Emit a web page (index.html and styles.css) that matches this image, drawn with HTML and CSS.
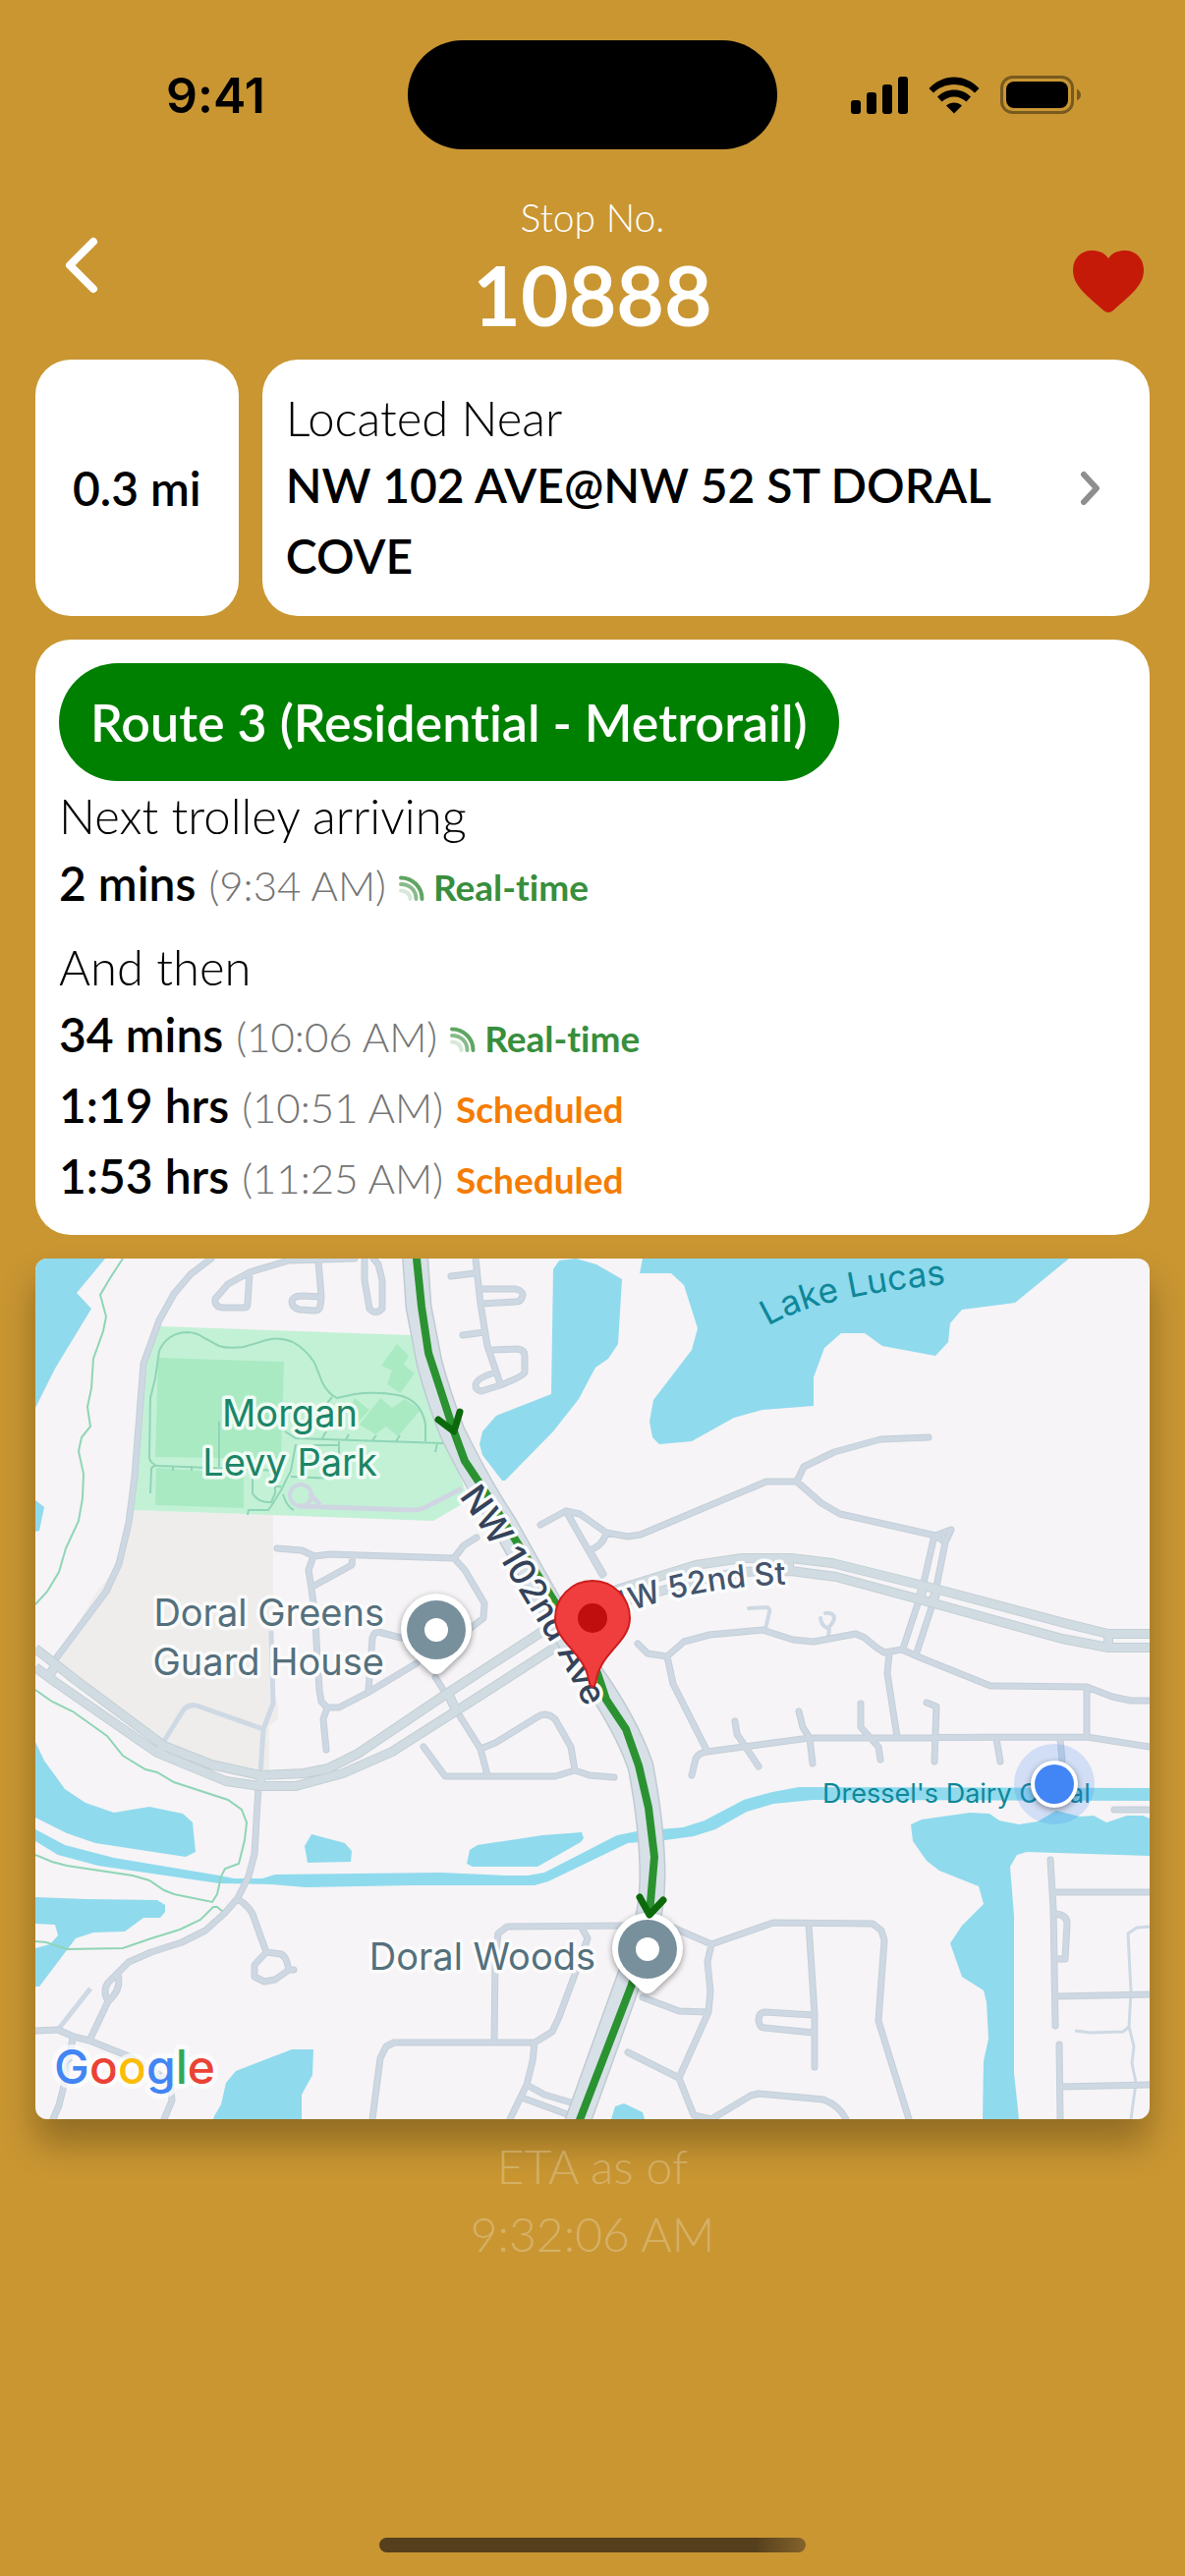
FILE: index.html
```html
<!DOCTYPE html>
<html lang="en">
<head>
    <meta charset="UTF-8">
    <meta name="viewport" content="width=device-width, initial-scale=1.0">
    <title>Stop 10888</title>
    <link rel="stylesheet" href="styles.css">
</head>
<body>
    <div class="status-bar">
        <div class="status-time">9:41</div>
        <div class="island"></div>
        <div class="status-icons">
            <svg class="signal-icon" viewBox="0 0 58 38">
                <rect x="0" y="24" width="10" height="14" rx="3"/>
                <rect x="16" y="16" width="10" height="22" rx="3"/>
                <rect x="32" y="8" width="10" height="30" rx="3"/>
                <rect x="48" y="0" width="10" height="38" rx="3"/>
            </svg>
            <svg class="wifi-icon" viewBox="0 0 52 38">
                <path d="M26 8C34.500 8 42 11.500 47 16.500L51.500 12C45 5 36 0.500 26 0.500S7 5 0.500 12L5 16.500C10 11.500 17.500 8 26 8Z"/>
                <path d="M26 20.500C31 20.500 35 22.500 38.500 25.500L43 20.500C38.500 16 32.500 13.500 26 13.500S13.500 16 9 20.500L13.500 25.500C17 22.500 21 20.500 26 20.500Z"/>
                <path d="M26 37.500L34 29.500C32 27.500 29 26.500 26 26.500S20 27.500 18 29.500Z"/>
            </svg>
            <svg class="battery-icon" viewBox="0 0 82 40">
                <rect x="1.500" y="1.500" width="72" height="36" rx="11" fill="none" stroke="#000" stroke-opacity=".4" stroke-width="3"/>
                <rect x="6" y="6" width="63" height="27" rx="8"/>
                <path d="M78 13.500C80.500 15 82 17 82 19.500S80.500 24 78 25.500Z" opacity=".4"/>
            </svg>
        </div>
    </div>

    <header class="header">
        <button class="back-btn" aria-label="Back">
            <svg class="back-icon" viewBox="0 0 34 58">
                <path d="M29 5L5 29L29 53"/>
            </svg>
        </button>
        <div class="stop-title">
            <div class="stop-label">Stop No.</div>
            <h1>10888</h1>
        </div>
        <button class="favorite-btn" aria-label="Favorite">
            <svg class="heart-icon" viewBox="0 0 72 64">
                <path d="M36 63C34 63 32 62 30 60C12 44 0 35 0 20C0 8 8 0 19 0C26 0 32 2 36 8C40 2 46 0 53 0C64 0 72 8 72 20C72 35 60 44 42 60C40 62 38 63 36 63Z"/>
            </svg>
        </button>
    </header>

    <main class="content">
        <div class="info-row">
            <div class="card distance-card">0.3 mi</div>
            <a href="#map" class="card location-card">
                <div class="location">
                    <div class="label">Located Near</div>
                    <div class="value">NW 102 AVE@NW 52 ST DORAL COVE</div>
                </div>
                <svg class="chevron-icon" viewBox="0 0 24 36">
                    <path d="M5 4L18 18L5 32"/>
                </svg>
            </a>
        </div>

        <section class="card route-card">
            <button class="route-btn">Route 3 (Residential - Metrorail)</button>
            <div class="label">Next trolley arriving</div>
            <div class="arrival">
                <span class="eta">2 mins</span>
                <span class="clock">(9:34 AM)</span>
                <span class="live">
                    <svg class="live-icon" viewBox="0 0 26 26"><use href="#live"/></svg>
                    Real-time
                </span>
            </div>
            <div class="label later">And then</div>
            <div class="arrival">
                <span class="eta">34 mins</span>
                <span class="clock">(10:06 AM)</span>
                <span class="live">
                    <svg class="live-icon" viewBox="0 0 26 26"><use href="#live"/></svg>
                    Real-time
                </span>
            </div>
            <div class="arrival">
                <span class="eta">1:19 hrs</span>
                <span class="clock">(10:51 AM)</span>
                <span class="scheduled">Scheduled</span>
            </div>
            <div class="arrival">
                <span class="eta">1:53 hrs</span>
                <span class="clock">(11:25 AM)</span>
                <span class="scheduled">Scheduled</span>
            </div>
        </section>

        <div class="map" id="map">
            <svg class="map-canvas" viewBox="0 0 1134 876">
                <defs>
                    <g id="live" fill="none" stroke="#388e3c" stroke-width="4" stroke-linecap="round">
                        <path d="M2 2.500C14 2.500 23.500 12 23.500 24" opacity=".8"/>
                        <path d="M2 9C11 9 17.500 15 17.500 24" opacity=".6"/>
                        <path d="M2 15.500C7 15.500 11.500 19 11.500 24" opacity=".2"/>
                    </g>
                    <path id="streets" d="M179 0L158 16L141 36L126 63L110 107L101 222L95 269L85 311L72 339L21 407
                        M325 0L258 2L218 14L196 26L183 41Q182 50 192 50H212Q216 50 216 46L218 14 M288 2L291 39L290 48Q289 53 284 53L269 52Q261 50 261 44Q262 38 271 38L291 39
                        M335 0V22L340 51Q346 58 353 51V22L349 6L344 0
                        M448 0L453 46L460 89L473 127 M423 18L447 15 M453 31H489Q496 33 496 37Q495 44 489 44L454 46 M435 78L457 75
                        M464 93L491 92Q498 93 498 99V116Q496 120 473 129L454 135Q448 134 448 129Q448 122 468 116
                        M246 295L271 297L284 303L300 301L426 305L436 292L449 284 M426 305L437 317L457 351L456 366L443 376
                        M283 303L278 317L281 336L285 366L286 389L289 439L291 451L297 457L293 469L296 500 M323 302L322 312L282 334
                        M297 457H309L338 442L388 412 M339 439L343 386Q345 380 349 380L372 386 M407 426L453 499L460 526
                        M453 499L468 493L512 466Q521 461 529 469L545 497L549 521L529 527H417L395 497 M549 521L564 526L589 528
                        M227 537L223 606L217 629L206 651L193 666L173 684L149 696L118 706L95 716L84 727L74 737Q68 746 74 756Q88 744 84 729
                        M74 756L55 796 M0 786L23 785L39 792L55 796L95 812L114 824L137 837L139 857L131 876 M38 794L28 846L24 862L18 876
                        M206 652Q216 658 221 667L235 706L250 708Q254 710 256 716L258 724L244 734L233 736L223 731V719L235 706 M258 724H263
                        M467 798L468 712L471 687L480 680L599 679 M556 681L562 692L550 726L533 772L526 787L508 798L365 798L357 802L351 814L343 876
                        M508 798L506 817L500 841L483 876 M500 841L518 851L545 859 M495 854L541 871
                        M514 271L540 257L554 260L581 279L603 283L616 281L744 227H775L782 212L813 197L860 184L909 182
                        M775 227L800 249L819 260L916 282L932 276L926 289L916 282 M540 257L577 322 M581 279Q578 292 564 297L578 321
                        M914 286L902 339L883 397 M926 289L914 349L896 404
                        M649 681L688 698L751 676L852 677L861 684L864 694L858 776L889 876 M787 677L793 769V823
                        M792 770L742 767Q736 768 736 775Q737 783 742 783L792 788
                        M688 698L684 716L687 746L685 767L655 834L670 872L688 876L728 852L736 850L802 856Q818 862 825 876 M685 767L655 766L618 752 M603 808L655 834
                        M613 392L623 402L643 405L660 390L686 383L740 378L771 388L792 390L835 382L844 386L856 396L864 401L882 398L900 406L972 435L1070 436L1096 446L1115 450H1134
                        M643 405L649 433L684 502 M869 402L867 422L877 487
                        M668 526L672 509Q675 503 684 502L788 488L1070 487L1134 497 M1070 436V487
                        M712 471L714 484L736 517 M777 461L781 477L788 488L791 514 M840 453V477L858 497L860 510 M907 452L917 456L915 512
                        M978 489L982 512 M1043 489L1045 511 M1098 561H1134
                        M1033 612L1036 662L1038 781 M1036 645H1134 M1038 667Q1050 668 1050 677L1048 713H1038 M1040 751L1134 749
                        M1042 800L1043 876 M1043 843L1134 841"/>
                    <path id="avenue52" d="M0 397L41 429L131 496L179 515L229 526L273 524L298 519L328 504L420 442L520 377L560 350L595 336L672 312L719 305H769L811 310L904 333L1051 372L1092 382H1134
                        M0 416L20 431L124 503L194 532L229 537H265L313 524L363 502L462 439L527 397L570 364L600 349L680 326L719 319L769 318L815 324L900 347L1045 387L1092 396H1134 M22 413L14 424 M131 496L124 503 M229 526V537 M420 442L428 460 M767 305V318 M904 333L900 347 M918 337L912 351 M1092 382V396"/>
                    <path id="avenue102" d="M386 -10L390 49L401 106Q410 140 424 176Q450 230 478 272L506 322L556 410Q600 470 616 517Q628 580 628 629Q628 660 618 695L600 745L550 884"/>
                    <path id="grey-pin" d="M0 45Q-5 45 -9 40L-26 24A36 36 0 1 1 26 24L9 40Q5 45 0 45Z"/>
                    <path id="lakeCurve" d="M746 69Q796 38 930 26"/>
                    <path id="curve52" d="M585 367Q665 333 780 331"/>
                    <path id="curve102" d="M431 242Q455 275 476 311T535 408L572 480"/>
                </defs>

                <rect width="1134" height="876" fill="#f6f4f6"/>
                <path fill="#eeedeb" d="M99 256L242 261V440L247 455V469L238 476V522L175 512L129 492L22 408L62 340L85 312Z"/>

                <!-- park -->
                <path fill="#c3f1d6" d="M126 69L382 78L441 246L405 267L99 256L110 107Z"/>
                <path fill="#a9eac3" d="M125 101L253 105L250 204L122 202Z M123 213L212 219V254L122 251Z M368 87L380 99L375 108L386 117L371 137L358 128L363 114L352 109Z M351 142L363 152L376 143L392 154L369 181L357 171L346 179L330 169Z M325 142L340 154L328 167L318 158Z"/>
                <g fill="none" stroke="#8fd5b6" stroke-width="2">
                    <path d="M117 239L118 214Q120 210 126 211L250 216 M187 166V212 M122 210Q116 207 116 202L117 142L122 122L126 94Q134 76 154 75Q164 75 172 81L187 89Q196 92 212 90L235 83Q248 79 262 85Q276 93 284 106L292 126Q298 138 307 142L325 138Q347 135 369 139Q393 144 397 169V186"/>
                    <path d="M415 188L265 183L254 176 M265 189L260 216L250 236L240 252L237 256H217L216 261 M221 222V239Q227 249 240 248L244 239V232H250 M252 240Q256 253 263 256 M309 186V205 M283 190H309 M305 224L260 222 M302 141L297 147 M296 176L292 183 M319 179L316 184 M347 180L343 185 M371 180L367 186 M140 211V216 M159 211V216 M409 188L407 197"/>
                </g>

                <!-- water -->
                <g fill="#90daed">
                    <path d="M0 0H71L42 35L57 51L20 112L0 152Z M0 246L9 253L4 277L0 278Z"/>
                    <path d="M527 11L533 2L550 0L571 6L597 21L593 87L583 102L570 111L564 122L553 143L527 176L478 226H475L455 200L452 189L455 176L469 160L525 138Z"/>
                    <path d="M618 0L615 15H647L660 27L674 71L668 93L629 144L625 166L628 182L635 189L668 186L711 162L740 154L792 150V121L803 91L820 76H844L862 89L916 99L929 85L931 66L943 52L997 45L1052 0Z"/>
                    <path d="M0 492L9 511L30 540L51 554L80 564L116 558L150 565L160 574L163 604L153 609L61 595L32 585L0 569Z"/>
                    <path d="M0 581L30 597L80 610L187 628L202 631H231L244 627L325 626L413 625L478 628H501L518 625L592 587L612 583L659 579L681 572L721 551L750 543L777 538L1134 539V552L792 551L751 555L724 563L692 581L670 588L641 592L603 595L522 634L508 638H384L275 640L240 637L187 636L64 618L23 607L0 593Z"/>
                    <path d="M274 598L281 586L315 595L322 603L321 614L277 615Z M439 616L442 602L450 597L516 587L556 584L558 590L555 594L511 619H445Z"/>
                    <path d="M0 650L51 652L124 653L132 658V665L127 671H110L91 685L59 686L41 692L4 741H0V702L15 698L23 689L20 678L0 677Z"/>
                    <path d="M182 873L189 861L194 839L204 827L261 805H283L282 831L271 851V876H181Z M586 876L590 863L599 860L618 869L620 876Z"/>
                    <path d="M891 576L902 571L951 564L971 565L981 572L1001 576L1020 573L1039 562L1063 568L1077 567L1090 574L1111 567H1127L1134 570V608L1009 604L999 607L992 619L996 669V829L1001 876H964L965 817L970 794L968 757L965 745L943 731L931 697L943 679L965 657L960 639L920 623L907 613L893 593Z"/>
                </g>

                <!-- creek trails -->
                <path fill="none" stroke="#8fd5b6" stroke-width="2" d="M89 0L76 20L66 37L72 59L69 74L59 102L57 132L53 151L56 171L47 182L44 196L49 219L48 244L44 267L31 295L24 319L12 339L0 352
                    M0 439L17 451L38 461L73 486L89 506L112 520L124 523L141 533L196 551L210 561L215 574L213 592L207 616L193 621L189 629L185 647L180 655L141 647L131 643L116 633L99 628L32 618L17 614L0 607
                    M0 695L11 696L32 703L89 702L118 692L147 683L168 673L181 660H185L191 665"/>

                <!-- roads -->
                <g fill="none" stroke-linejoin="round">
                    <path d="M434 234L405 249Q394 256 384 256L267 252M279 239L290 251" stroke="#cfd6e2" stroke-width="5"/>
                    <circle cx="270" cy="241" r="11" stroke="#cfd6e2" stroke-width="4"/>
                    <path d="M240 379L242 453L232 479L229 526 M131 491L149 462Q154 453 164 455L232 479 M56 743L23 785" stroke="#ced9e4" stroke-width="5"/>
                    <path d="M726 356L744 355Q748 356 747 360L743 377 M799 366Q800 374 806 376Q812 372 813 366Q812 360 804 361 M808 376L807 386" stroke="#ced9e4" stroke-width="4" stroke-linecap="round"/>
                    <path d="M1134 680L1121 681L1112 687L1115 746L1113 782L1118 802L1116 819L1120 839L1115 876 M1058 786L1074 788L1107 787L1113 782" stroke="#ced9e4" stroke-width="3"/>
                    <use href="#streets" stroke="#c4cfd9" stroke-width="7" stroke-linecap="round"/>
                    <use href="#streets" stroke="#ced8e3" stroke-width="5" stroke-linecap="round"/>
                    <use href="#avenue52" stroke="#c3cfd5" stroke-width="10"/>
                    <use href="#avenue52" stroke="#d1dce2" stroke-width="8"/>
                    <use href="#avenue102" stroke="#bfcad2" stroke-width="27"/>
                    <use href="#avenue102" stroke="#d7e0e7" stroke-width="24"/>
                </g>

                <!-- place labels -->
                <g class="place park-name" text-anchor="middle">
                    <text x="259" y="171">Morgan</text>
                    <text x="259" y="221">Levy Park</text>
                </g>
                <g class="place" text-anchor="end">
                    <text x="355" y="374">Doral Greens</text>
                    <text x="355" y="424">Guard House</text>
                    <text x="570" y="724">Doral Woods</text>
                </g>
                <text class="water-name lake"><textPath href="#lakeCurve">Lake Lucas</textPath></text>
                <text class="water-name" x="801" y="554">Dressel's Dairy Canal</text>

                <!-- place pins -->
                <g class="place-pin" transform="translate(408 378)">
                    <use href="#grey-pin" fill="#fff"/>
                    <circle r="30" fill="#78909c"/>
                    <circle r="12" fill="#fff"/>
                </g>

                <!-- trolley route -->
                <path d="M388 -5L388 0L393 49L400 96L426 176L437 206L451 227L539 366L572 422L581 449L601 479L614 516L624 559L630 609L625 667L607 739L552 882" fill="none" stroke="#2b9231" stroke-width="8" stroke-linejoin="round"/>
                <g class="place-pin" transform="translate(623 703)">
                    <use href="#grey-pin" fill="#fff"/>
                    <circle r="30" fill="#78909c"/>
                    <circle r="12" fill="#fff"/>
                </g>
                <path d="M410 164L426 176L432 156 M615 650L625 668L639 653 M538 402L554 411L560 392" fill="none" stroke="#0c6a0c" stroke-width="7" stroke-linecap="round" stroke-linejoin="round"/>
                <text class="street-name"><textPath href="#curve52">NW 52nd St</textPath></text>
                <text class="street-name main-street"><textPath href="#curve102">NW 102nd Ave</textPath></text>

                <!-- stop marker -->
                <path d="M567 436C565 436 564 434 563 428C558 401 529 390 529 366A38 38 0 0 1 605 366C605 390 576 401 571 428C570 434 569 436 567 436Z" fill="#f03e3e" stroke="#cc1d1d" stroke-width="2"/>
                <circle cx="567" cy="366" r="15" fill="#c00d0d"/>

                <!-- rider position -->
                <circle cx="1037" cy="535" r="41" fill="#4285f4" opacity=".2"/>
                <circle class="rider" cx="1037" cy="535" r="24" fill="#fff"/>
                <circle cx="1037" cy="535" r="20" fill="#4285f4"/>

                <text class="google" x="19" y="840"><tspan fill="#4285f4">G</tspan><tspan fill="#ea4335">o</tspan><tspan fill="#fbbc04">o</tspan><tspan fill="#4285f4">g</tspan><tspan fill="#34a853">l</tspan><tspan fill="#ea4335">e</tspan></text>
            </svg>
        </div>

        <div class="updated">
            <div>ETA as of</div>
            <div>9:32:06 AM</div>
        </div>
    </main>

    <div class="home-indicator"></div>
</body>
</html>
```
FILE: styles.css
```css
* {
    box-sizing: border-box;
}

body {
    font-family: 'Lato', sans-serif;
    font-variant-ligatures: none;
    margin: 0;
    background-color: #c99632;
    color: #000;
    min-height: 100vh;
    display: flex;
    flex-direction: column;
}

button {
    font-family: inherit;
    font-variant-ligatures: inherit;
    border: none;
    padding: 0;
    background: none;
    cursor: pointer;
}

.status-bar {
    display: grid;
    grid-template-columns: 1fr auto 1fr;
    align-items: center;
    padding-top: 41px;
}

.status-time {
    font-family: 'Inter', sans-serif;
    font-size: 50px;
    font-weight: 600;
    text-align: center;
    padding-left: 24px;
}

.island {
    width: 376px;
    height: 111px;
    border-radius: 56px;
    background-color: #000;
}

.status-icons {
    display: flex;
    align-items: center;
    justify-content: center;
    gap: 21px;
    padding-right: 32px;
}

.signal-icon {
    width: 58px;
    height: 38px;
}

.wifi-icon {
    width: 52px;
    height: 38px;
}

.battery-icon {
    width: 82px;
    height: 40px;
}

.header {
    display: grid;
    grid-template-columns: 1fr auto 1fr;
    align-items: center;
    padding: 42px 42px 14px;
    color: white;
}

.back-btn {
    justify-self: start;
    padding: 0 24px 6px;
}

.back-icon {
    display: block;
    width: 34px;
    height: 58px;
    fill: none;
    stroke: white;
    stroke-width: 8;
    stroke-linecap: round;
    stroke-linejoin: round;
}

.stop-title {
    text-align: center;
}

.stop-label {
    font-size: 39px;
    font-weight: 300;
    line-height: 54px;
}

.stop-title h1 {
    margin: 0;
    font-size: 84px;
    font-weight: 700;
    line-height: 104px;
}

.favorite-btn {
    justify-self: end;
    padding-top: 28px;
}

.heart-icon {
    display: block;
    width: 72px;
    height: 64px;
    fill: #c61a09;
}

.content {
    display: flex;
    flex-direction: column;
    gap: 24px;
    padding: 0 36px;
}

.card {
    background-color: white;
    border-radius: 36px;
    padding: 24px;
}

.info-row {
    display: flex;
    gap: 24px;
}

.distance-card {
    display: flex;
    align-items: center;
    flex: none;
    padding: 0 38px;
    font-size: 48px;
    font-weight: 600;
}

.location-card {
    display: flex;
    align-items: center;
    flex: 1;
    gap: 24px;
    padding: 26px 48px 25px 24px;
    color: inherit;
    text-decoration: none;
}

.location {
    flex: 1;
}

.label {
    font-size: 49px;
    font-weight: 300;
    line-height: 66px;
}

.value {
    font-size: 48px;
    font-weight: 600;
    line-height: 72px;
}

.chevron-icon {
    width: 24px;
    height: 36px;
    fill: none;
    stroke: #8e8e8e;
    stroke-width: 6;
    stroke-linecap: round;
    stroke-linejoin: round;
}

.route-btn {
    display: block;
    height: 120px;
    margin-bottom: 2px;
    padding: 0 32px;
    border-radius: 60px;
    background-color: #008000;
    color: white;
    font-size: 52px;
    font-weight: 600;
}

.arrival {
    display: flex;
    align-items: baseline;
    gap: 13px;
    line-height: 48px;
}

.later {
    margin-top: 16px;
}

.eta {
    font-size: 48px;
    font-weight: 600;
    line-height: 72px;
}

.clock {
    font-size: 42px;
    font-weight: 300;
    color: #757575;
}

.live,
.scheduled {
    font-size: 37px;
    font-weight: 700;
}

.live {
    color: #388e3c;
}

.live-icon {
    width: 26px;
    height: 26px;
}

.scheduled {
    color: #f57c00;
}

.map {
    border-radius: 12px;
    overflow: hidden;
    box-shadow: 0 24px 36px rgba(0, 0, 0, 0.28);
}

.map-canvas {
    display: block;
    width: 100%;
}

.map text {
    font-family: 'Inter', sans-serif;
    paint-order: stroke;
    stroke-linejoin: round;
}

.place {
    font-size: 38px;
    fill: #55707d;
    stroke: #fbfbfb;
    stroke-width: 7;
}

.park-name {
    fill: #1b8567;
    stroke: #effcf4;
}

.water-name {
    font-size: 27px;
    fill: #0d889a;
}

.lake {
    font-size: 35px;
}

.street-name {
    font-size: 32px;
    font-weight: 500;
    fill: #44546c;
    stroke: #fbfcfd;
    stroke-width: 7;
}

.main-street {
    font-size: 36px;
    fill: #34435a;
}

.place-pin,
.rider {
    filter: drop-shadow(0 2px 3px rgba(0, 0, 0, 0.4));
}

.google {
    font-size: 48px;
    font-weight: 500;
    stroke: rgba(255, 255, 255, 0.7);
    stroke-width: 10;
}

.updated {
    margin-top: -11px;
    text-align: center;
    font-size: 48px;
    font-weight: 300;
    line-height: 69px;
    color: rgba(255, 255, 255, 0.27);
}

.home-indicator {
    align-self: center;
    width: 36%;
    height: 15px;
    margin-top: auto;
    margin-bottom: 24px;
    border-radius: 8px;
    background: linear-gradient(to right, #553f1c 88%, #84632c);
}
```
